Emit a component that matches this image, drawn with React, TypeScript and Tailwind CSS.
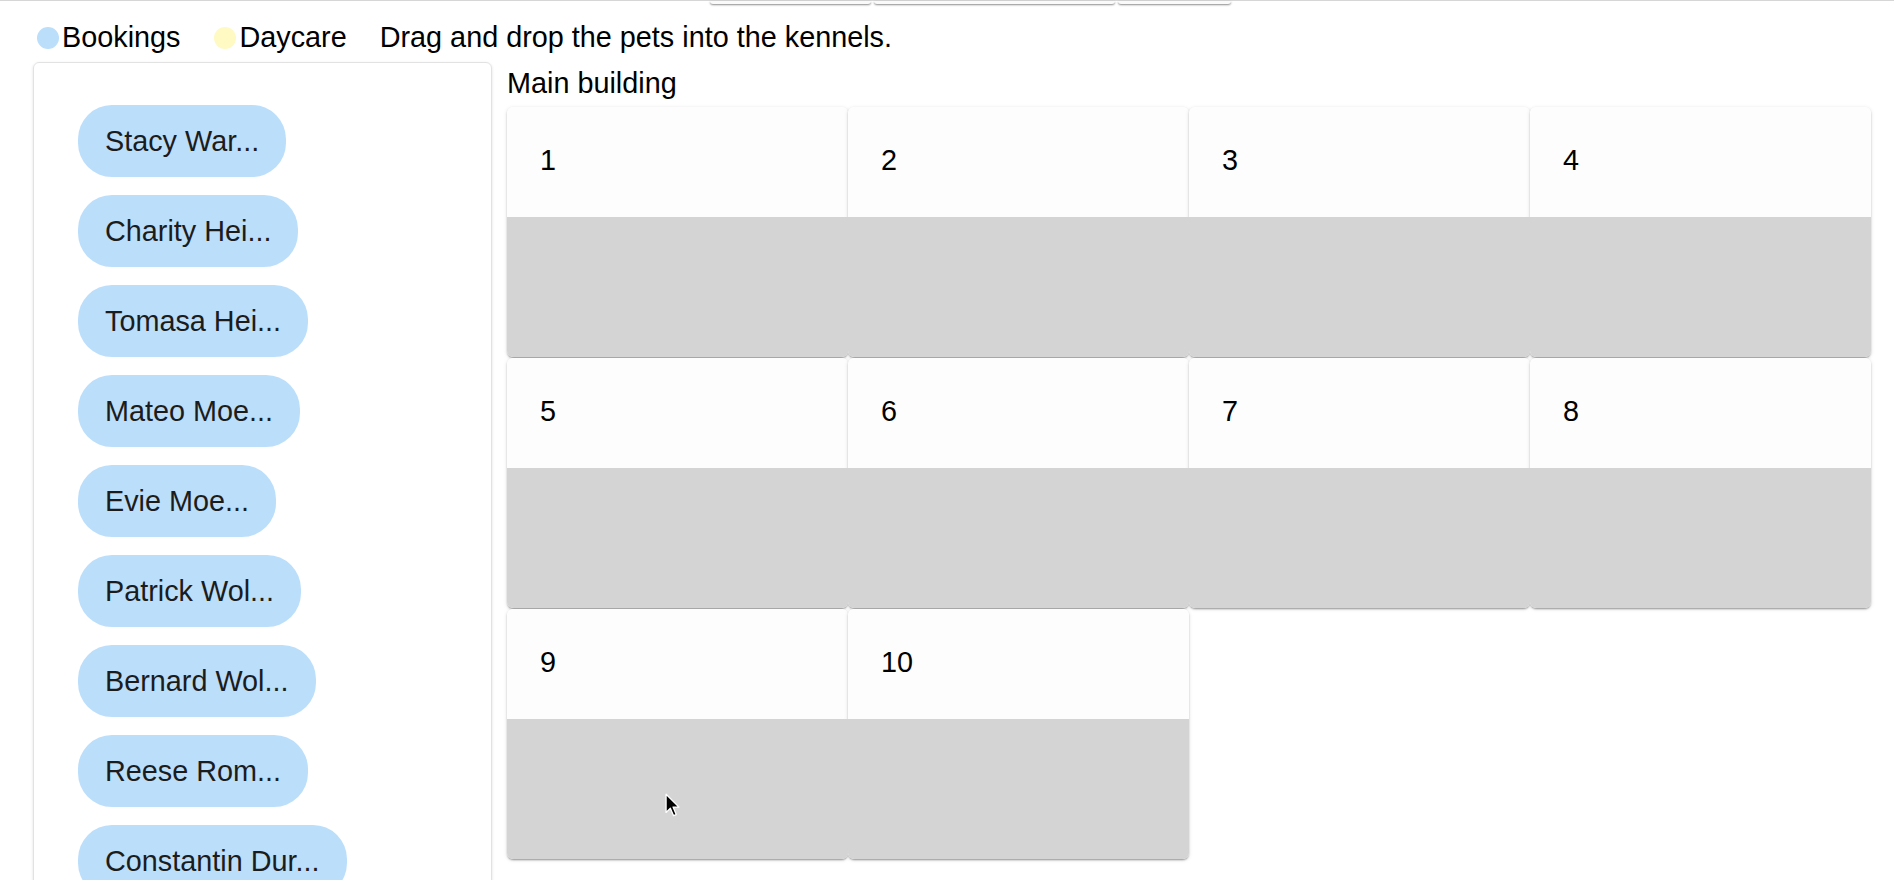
import React from "react";

const pets = [
  "Stacy War...",
  "Charity Hei...",
  "Tomasa Hei...",
  "Mateo Moe...",
  "Evie Moe...",
  "Patrick Wol...",
  "Bernard Wol...",
  "Reese Rom...",
  "Constantin Dur...",
];

const kennels = ["1", "2", "3", "4", "5", "6", "7", "8", "9", "10"];

function Cursor() {
  return (
    <svg
      className="absolute left-[158px] top-[74px]"
      width="15"
      height="25"
      viewBox="0 0 14 23"
    >
      <path
        d="M1 1 L1 18 L5 14 L8 21 L10.5 20 L7.5 13 L13 13 Z"
        fill="#000"
        stroke="#fff"
        strokeWidth="1.2"
        strokeLinejoin="round"
      />
    </svg>
  );
}

export default function App() {
  return (
    <div className="h-[880px] w-full overflow-hidden bg-white text-black font-['Liberation_Sans',Arial,sans-serif] text-[28.8px]">
      {/* cut-off toolbar above */}
      <div className="h-[5px] border-t border-[#d6d6d6] flex pl-[710px] gap-[3px]">
        <div className="w-[161px] h-[3px] bg-[#fafafa] rounded-b-[3px] shadow-[0_1px_2px_rgba(0,0,0,0.45)]" />
        <div className="w-[241px] h-[3px] bg-[#fafafa] rounded-b-[3px] shadow-[0_1px_2px_rgba(0,0,0,0.45)]" />
        <div className="w-[113px] h-[3px] bg-[#fafafa] rounded-b-[3px] shadow-[0_1px_2px_rgba(0,0,0,0.45)]" />
      </div>

      {/* legend */}
      <div className="h-[57px] pt-[8px] pl-[37px] flex items-center leading-[33px]">
        <span className="w-[22px] h-[22px] rounded-full bg-[#bbdefb]" />
        <span className="ml-[3px]">Bookings</span>
        <span className="ml-[34px] w-[22px] h-[22px] rounded-full bg-[#fff9c4]" />
        <span className="ml-[3px]">Daycare</span>
        <span className="ml-[33px]">Drag and drop the pets into the kennels.</span>
      </div>

      <div className="flex pl-[33px] gap-[15px] items-start">
        {/* pets panel */}
        <div className="w-[459px] h-[900px] shrink-0 border border-[#e2e2e2] rounded-[6px] shadow-[0_1px_3px_rgba(0,0,0,0.12)] pt-[42px] pl-[44px] flex flex-col items-start gap-[18px]">
          {pets.map((p) => (
            <div
              key={p}
              className="h-[72px] px-[27px] flex items-center rounded-[34px] bg-[#bbdefb] text-[#1c1c1c] leading-[36px] whitespace-nowrap"
            >
              {p}
            </div>
          ))}
        </div>

        {/* kennels */}
        <div>
          <div className="h-[45px] leading-[42px]">Main building</div>
          <div className="grid grid-cols-[repeat(4,341px)] gap-y-[1px]">
            {kennels.map((k) => (
              <div
                key={k}
                className="h-[250px] rounded-[6px] overflow-hidden bg-white shadow-[0_2px_2px_-1px_rgba(0,0,0,0.25),0_1px_2px_0_rgba(0,0,0,0.14),0_1px_4px_0_rgba(0,0,0,0.12)] flex flex-col"
              >
                <div className="h-[110px] bg-[#fdfdfd] pl-[33px] pt-[37px] leading-[33px]">
                  {k}
                </div>
                <div className="relative flex-1 bg-[#d4d4d4]">
                  {k === "9" && <Cursor />}
                </div>
              </div>
            ))}
          </div>
        </div>
      </div>
    </div>
  );
}
